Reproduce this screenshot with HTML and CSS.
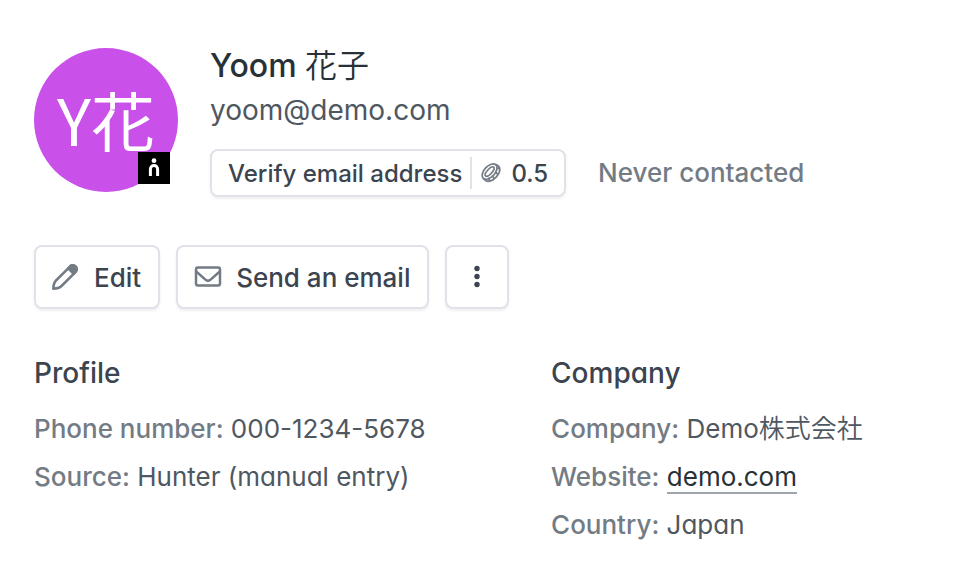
FILE: index.html
```html
<!DOCTYPE html>
<html lang="en">
<head>
  <meta charset="UTF-8">
  <meta name="viewport" content="width=device-width, initial-scale=1.0">
  <title>Yoom 花子</title>
  <link rel="stylesheet" href="styles.css">
</head>
<body>
  <main class="lead">
    <header class="lead-header">
      <div class="avatar">
        <span class="avatar-initials">Y花</span>
        <svg class="avatar-badge" viewBox="0 0 32 32" aria-hidden="true">
          <rect width="32" height="32" fill="#000"/>
          <circle cx="16" cy="8.700" r="2.400" fill="#fff"/>
          <path d="M12.400 24v-7a3.600 3.600 0 0 1 7.200 0v7" fill="none" stroke="#fff" stroke-width="3"/>
        </svg>
      </div>
      <div class="lead-info">
        <h1>Yoom <span class="cjk">花子</span></h1>
        <p class="lead-email">yoom@demo.com</p>
        <div class="verify-row">
          <button type="button" class="btn btn-verify">
            <span>Verify email address</span>
            <span class="credits">
              <svg width="20" height="20" viewBox="0 0 20 20" fill="none" stroke="#737b84" stroke-width="1.700" aria-hidden="true">
                <ellipse cx="8.600" cy="8.600" rx="9.200" ry="5.400" transform="rotate(-47 8.600 8.600)"/>
                <ellipse cx="8.600" cy="8.600" rx="6" ry="2.400" transform="rotate(-47 8.600 8.600)"/>
                <path d="M14.600 1.500c5.600 1.500 5.400 7.300.8 12.400-4.100 4.600-10 6.600-13 1.200M7.600 14.500l1.200 4M11.400 12.200l1.600 3.800M14.300 8.600l2.700 3M16 4.800l3 1.400"/>
              </svg>
              0.5
            </span>
          </button>
          <span class="contact-status">Never contacted</span>
        </div>
      </div>
    </header>

    <!-- Actions -->
    <div class="actions">
      <button type="button" class="btn">
        <svg width="28" height="28" viewBox="0 0 28 28" fill="none" stroke="#737b84" stroke-width="2.500" stroke-linejoin="round" aria-hidden="true">
          <path d="M1.300 25.700q.2-5.700 2.700-8.200L18.200 3.300a3.900 3.900 0 0 1 5.500 5.500L9.500 23q-2.500 2.500-8.200 2.700z"/>
          <path d="M16.200 5.300l2-2a3.900 3.900 0 0 1 5.500 5.500l-2 2z" fill="#737b84"/>
        </svg>
        Edit
      </button>
      <button type="button" class="btn">
        <svg width="28" height="28" viewBox="0 0 28 28" fill="none" stroke="#737b84" stroke-width="2.500" stroke-linejoin="round" aria-hidden="true">
          <rect x="2" y="4.500" width="24" height="18" rx="2"/>
          <path d="M2.500 8.800l9.500 8.300q2 1.500 4 0l9.500-8.300"/>
        </svg>
        Send an email
      </button>
      <button type="button" class="btn btn-more" aria-label="More actions">
        <svg width="28" height="28" viewBox="0 0 28 28" fill="#3b444f" aria-hidden="true">
          <circle cx="14" cy="5.500" r="2.700"/>
          <circle cx="14" cy="13.500" r="2.700"/>
          <circle cx="14" cy="21.500" r="2.700"/>
        </svg>
      </button>
    </div>

    <!-- Details -->
    <div class="details">
      <section>
        <h2>Profile</h2>
        <dl>
          <div><dt>Phone number:</dt> <dd>000-1234-5678</dd></div>
          <div><dt>Source:</dt> <dd>Hunter (manual entry)</dd></div>
        </dl>
      </section>
      <section>
        <h2>Company</h2>
        <dl>
          <div><dt>Company:</dt> <dd>Demo<span class="cjk">株式会社</span></dd></div>
          <div><dt>Website:</dt> <dd><a href="#">demo.com</a></dd></div>
          <div><dt>Country:</dt> <dd>Japan</dd></div>
        </dl>
      </section>
    </div>
  </main>
</body>
</html>
```

FILE: styles.css
```css
* {
  margin: 0;
  padding: 0;
  box-sizing: border-box;
}

body {
  background-color: #fff;
  color: #4f5761;
  font-family: Inter, "Noto Sans CJK JP", sans-serif;
  font-size: 26px;
  line-height: 48px;
}

.lead {
  padding: 44px 34px 20px;
}

.lead-header {
  display: flex;
  align-items: flex-start;
  gap: 32px;
}

.avatar {
  position: relative;
  flex: none;
  width: 144px;
  height: 144px;
  margin-top: 4px;
  border-radius: 50%;
  background-color: #c950e8;
  color: #fff;
  text-align: center;
}

.avatar-initials {
  font-family: "Noto Sans CJK JP", sans-serif;
  font-size: 64px;
  line-height: 140px;
}

/* Badge sits over the lower right of the avatar */
.avatar-badge {
  position: absolute;
  right: 8px;
  bottom: 8px;
  width: 32px;
  height: 32px;
}

h1 {
  color: #283138;
  font-size: 32px;
  font-weight: 500;
  line-height: 44px;
}

.cjk {
  font-weight: 350;
}

.lead-email {
  font-size: 28px;
  line-height: 44px;
  font-feature-settings: "cv11";
}

.verify-row {
  display: flex;
  align-items: center;
  gap: 32px;
  margin-top: 17px;
}

.contact-status {
  color: #737b84;
  font-weight: 500;
}

.btn {
  display: flex;
  align-items: center;
  gap: 14px;
  height: 64px;
  padding: 0 17px 0 16px;
  border: 2px solid #dfe2e8;
  border-radius: 8px;
  background-color: #fff;
  box-shadow: 0 2px 3px rgba(40, 49, 56, 0.07);
  color: #3b444f;
  font-family: inherit;
  font-size: 26px;
  font-weight: 500;
  cursor: pointer;
}

.btn:hover {
  background-color: #f8f9fa;
}

.btn-verify {
  gap: 8px;
  height: 48px;
  padding: 0 16px;
  font-size: 24px;
}

.btn-more {
  padding: 0 16px;
}

.credits {
  display: flex;
  align-items: center;
  gap: 10px;
  height: 32px;
  padding-left: 9px;
  border-left: 2px solid #dfe2e8;
}

.actions {
  display: flex;
  gap: 16px;
  margin-top: 48px;
}

.details {
  display: grid;
  grid-template-columns: 17fr 13fr;
  gap: 32px;
  margin-top: 40px;
  font-feature-settings: "cv11";
}

h2 {
  margin-bottom: 8px;
  color: #3b444f;
  font-size: 28px;
  font-weight: 500;
}

dt,
dd {
  display: inline;
}

dt {
  color: #737b84;
  font-weight: 500;
}

.details a {
  border-bottom: 2px solid #9fa5ad;
  color: #283138;
  text-decoration: none;
}
```
